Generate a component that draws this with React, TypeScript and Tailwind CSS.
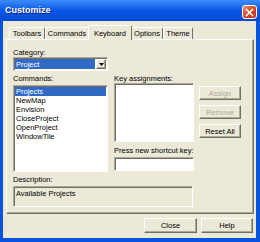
import React from "react";

const raised =
  "border border-t-white border-l-white border-r-[#716F64] border-b-[#716F64] shadow-[inset_-1px_-1px_0_#ACA899]";
const sunken =
  "border border-t-[#ACA899] border-l-[#ACA899] border-r-white border-b-white shadow-[inset_1px_1px_0_#716F64]";

function Tab({ label, w, active }: { label: string; w: string; active?: boolean }) {
  return (
    <div
      className={`${w} flex items-center justify-center bg-[#ECE9D8] border-l border-t border-r border-l-white border-t-white border-r-[#716F64] rounded-t-[2px] ${
        active ? "h-[15px] -mb-[1px] relative z-10 -mx-[1px]" : "h-[12px]"
      }`}
    >
      {label}
    </div>
  );
}

function Btn({ label, disabled, w }: { label: string; disabled?: boolean; w: string }) {
  return (
    <div
      className={`${w} h-[14px] flex items-center justify-center ${raised} ${
        disabled ? "text-[#ACA899]" : "text-black"
      }`}
    >
      {label}
    </div>
  );
}

export default function App() {
  const commands = ["Projects", "NewMap", "Envision", "CloseProject", "OpenProject", "WindowTile"];
  return (
    <div
      className="w-[260px] h-[242px] flex flex-col bg-[#0852E0] text-black leading-[9px] text-[7.5px]"
      style={{ fontFamily: '"Liberation Sans", Arial, sans-serif' }}
    >
      <div className="h-[21px] flex items-center justify-between pl-[5px] pr-[3px] bg-gradient-to-b from-[#3B8CF7] via-[#0858E6] to-[#0549D4]">
        <span className="text-white font-bold text-[9px] [text-shadow:1px_1px_0_#0A1E8C]">Customize</span>
        <div className="w-[15px] h-[14px] mt-[3px] rounded-[3px] border border-white bg-gradient-to-br from-[#E98A6C] via-[#D9471F] to-[#C2381A] flex items-center justify-center">
          <svg width="9" height="9" viewBox="0 0 9 9">
            <path d="M1.5 1.5L7.5 7.5M7.5 1.5L1.5 7.5" stroke="white" strokeWidth="1.6" strokeLinecap="square" />
          </svg>
        </div>
      </div>
      <div className="flex-1 mx-[3px] mr-[4px] mb-[4px] bg-[#ECE9D8] flex flex-col pl-[3px] pr-[2px] pt-[4px]">
        <div className="flex items-end pl-[3px] h-[14px]">
          <Tab label="Toolbars" w="w-[36px]" />
          <Tab label="Commands" w="w-[44px]" />
          <Tab label="Keyboard" w="w-[44px]" active />
          <Tab label="Options" w="w-[32px]" />
          <Tab label="Theme" w="w-[30px]" />
        </div>
        <div className={`w-[248px] h-[175px] ${raised} flex flex-col pl-[6px] pt-[8px]`}>
          <div className="flex">
            <div className="w-[95px] flex flex-col">
              <div className="h-[9px]">Category:</div>
              <div className={`h-[14px] bg-white ${sunken} flex items-center pl-[1px] pr-[1px]`}>
                <div className="flex-1 h-[10px] bg-[#316AC5] text-white pl-[1px] flex items-center">Project</div>
                <div className={`w-[10px] h-[10px] ml-[1px] bg-[#ECE9D8] ${raised} flex items-center justify-center`}>
                  <svg width="5" height="3" viewBox="0 0 5 3">
                    <path d="M0 0H5L2.5 3Z" fill="black" />
                  </svg>
                </div>
              </div>
              <div className="h-[9px] mt-[3px]">Commands:</div>
              <div className={`h-[87px] mt-[2px] bg-white ${sunken} pt-[1px] px-[1px]`}>
                {commands.map((c, i) => (
                  <div
                    key={c}
                    className={`h-[9px] pl-[1px] flex items-center ${i === 0 ? "bg-[#316AC5] text-white" : ""}`}
                  >
                    {c}
                  </div>
                ))}
              </div>
            </div>
            <div className="w-[80px] ml-[6px] flex flex-col pt-[26px]">
              <div className="h-[9px]">Key assignments:</div>
              <div className={`h-[59px] bg-white ${sunken}`} />
              <div className="h-[9px] mt-[4px]">Press new shortcut key:</div>
              <div className={`h-[14px] mt-[2px] bg-white ${sunken}`} />
            </div>
            <div className="ml-[5px] flex flex-col pt-[38px] gap-[5px]">
              <Btn label="Assign" disabled w="w-[42px]" />
              <Btn label="Remove" disabled w="w-[42px]" />
              <Btn label="Reset All" w="w-[42px]" />
            </div>
          </div>
          <div className="h-[9px] mt-[3px]">Description:</div>
          <div className={`w-[180px] h-[21px] mt-[2px] ${sunken} pl-[2px] pt-[2px]`}>Available Projects</div>
        </div>
        <div className="flex justify-end gap-[4px] mt-[4px] pr-[1px]">
          <Btn label="Close" w="w-[53px] h-[15px]" />
          <Btn label="Help" w="w-[52px] h-[15px]" />
        </div>
      </div>
    </div>
  );
}
